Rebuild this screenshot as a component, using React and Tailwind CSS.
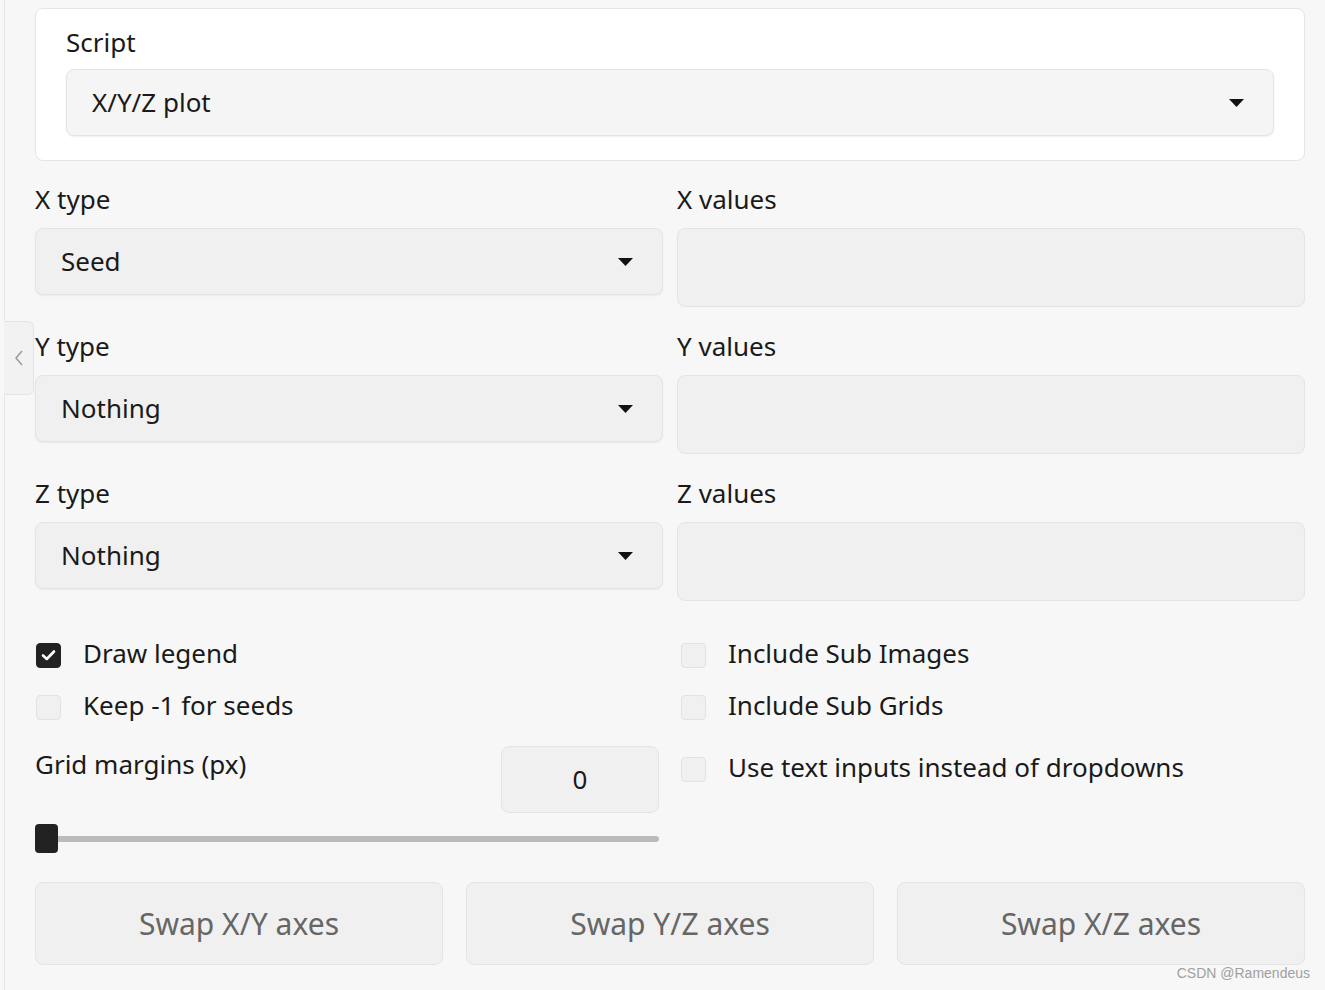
import React, { useState } from "react";

const font = { fontFamily: '"Noto Sans", "Open Sans", Arial, sans-serif' };

function Caret() {
  return (
    <svg width="15" height="8" viewBox="0 0 15 8" className="shrink-0">
      <path d="M0 0 L15 0 L7.5 8 Z" fill="#111" />
    </svg>
  );
}

function Dropdown({ value, className = "" }) {
  return (
    <div
      className={`h-[67px] flex items-center justify-between pl-[25px] pr-[29px] rounded-[8px] border border-[#e4e4e4] shadow-[0_1px_2px_rgba(0,0,0,0.06)] text-[26px] text-[#1a1a1a] ${className}`}
    >
      <span>{value}</span>
      <Caret />
    </div>
  );
}

function Checkbox({ checked, label, onToggle }) {
  return (
    <label className="flex items-center h-[52px] cursor-pointer" onClick={onToggle}>
      <span
        className={`w-[25px] h-[25px] rounded-[4px] border flex items-center justify-center ${
          checked ? "bg-[#222] border-[#222]" : "bg-[#f0f0f0] border-[#e2e2e2]"
        }`}
      >
        {checked && (
          <svg width="15" height="12" viewBox="0 0 15 12">
            <path d="M2 6.5 L5.8 10 L13 2.5" stroke="#fff" strokeWidth="2.6" fill="none" strokeLinecap="round" strokeLinejoin="round" />
          </svg>
        )}
      </span>
      <span className="ml-[22px] mb-[5px] text-[26px] text-[#1a1a1a] leading-none">{label}</span>
    </label>
  );
}

export default function App() {
  const [legend, setLegend] = useState(true);
  const [keepSeeds, setKeepSeeds] = useState(false);
  const [subImages, setSubImages] = useState(false);
  const [subGrids, setSubGrids] = useState(false);
  const [textInputs, setTextInputs] = useState(false);

  const axes = [
    { type: "X type", val: "Seed", values: "X values" },
    { type: "Y type", val: "Nothing", values: "Y values" },
    { type: "Z type", val: "Nothing", values: "Z values" },
  ];

  return (
    <div className="relative w-[1325px] h-[990px] bg-[#f7f7f7] overflow-hidden" style={font}>
      <div className="ml-[4px] h-full border-l border-[#e6e6e6] pl-[30px] pr-[20px] pt-[8px]">
        {/* Script card */}
        <div className="bg-white border border-[#e4e4e4] rounded-[8px] pl-[30px] pr-[30px] pt-[16px] pb-[24px]">
          <div className="h-[36px] pb-[2px] flex items-center text-[26px] text-[#1a1a1a]">Script</div>
          <Dropdown value="X/Y/Z plot" className="mt-[8px] h-[66px] bg-[#f5f5f5] pr-[29px]" />
        </div>

        {/* Axis rows */}
        <div className="mt-[22px] grid grid-cols-2 gap-x-[14px] gap-y-[23px]">
          {axes.map((a) => (
            <React.Fragment key={a.type}>
              <div>
                <div className="h-[36px] pb-[3px] flex items-center text-[26px] text-[#1a1a1a]">{a.type}</div>
                <Dropdown value={a.val} className="mt-[9px] bg-[#f0f0f0]" />
              </div>
              <div>
                <div className="h-[36px] pb-[3px] flex items-center text-[26px] text-[#1a1a1a]">{a.values}</div>
                <div className="mt-[9px] h-[79px] rounded-[8px] border border-[#e4e4e4] bg-[#f0f0f0]" />
              </div>
            </React.Fragment>
          ))}
        </div>

        {/* Options */}
        <div className="mt-[28px] flex">
          <div className="w-[624px] pl-[1px]">
            <Checkbox checked={legend} label="Draw legend" onToggle={() => setLegend(!legend)} />
            <Checkbox checked={keepSeeds} label="Keep -1 for seeds" onToggle={() => setKeepSeeds(!keepSeeds)} />
            <div className="mt-[13px] flex justify-between">
              <div className="text-[26px] text-[#1a1a1a] pt-[3px] leading-[30px] -ml-[1px]">Grid margins (px)</div>
              <div className="w-[158px] h-[67px] rounded-[8px] border border-[#e4e4e4] bg-[#f0f0f0] flex items-center justify-center text-[26px] text-[#1a1a1a]">
                0
              </div>
            </div>
            <div className="relative mt-[11px] h-[29px] flex items-center -ml-[1px]">
              <div className="w-full h-[6px] rounded-full bg-[#bbbbbb]" />
              <div className="absolute left-0 top-0 w-[23px] h-[29px] rounded-[4px] bg-[#222]" />
            </div>
          </div>
          <div className="ml-[22px]">
            <Checkbox checked={subImages} label="Include Sub Images" onToggle={() => setSubImages(!subImages)} />
            <Checkbox checked={subGrids} label="Include Sub Grids" onToggle={() => setSubGrids(!subGrids)} />
            <div className="mt-[10px]">
              <Checkbox checked={textInputs} label="Use text inputs instead of dropdowns" onToggle={() => setTextInputs(!textInputs)} />
            </div>
          </div>
        </div>

        {/* Swap buttons */}
        <div className="mt-[29px] grid grid-cols-3 gap-x-[23px]">
          {["Swap X/Y axes", "Swap Y/Z axes", "Swap X/Z axes"].map((t) => (
            <button
              key={t}
              className="h-[83px] rounded-[8px] border border-[#e4e4e4] bg-[#f0f0f0] text-[30px] text-[#666]"
            >
              {t}
            </button>
          ))}
        </div>
      </div>

      {/* collapse tab */}
      <div className="absolute left-[4px] top-[321px] w-[30px] h-[74px] rounded-r-[6px] border border-l-0 border-[#e4e4e4] bg-[#f2f2f2] flex items-center justify-center">
        <svg width="10" height="18" viewBox="0 0 10 18">
          <path d="M8 2 L2 9 L8 16" stroke="#9a9a9a" strokeWidth="1.5" fill="none" />
        </svg>
      </div>

      {/* watermark */}
      <div
        className="absolute right-[15px] bottom-[6px] text-[14px] text-[#a0a0a0]"
        style={{ fontFamily: '"Liberation Sans", Arial, sans-serif' }}
      >
        CSDN @Ramendeus
      </div>
    </div>
  );
}
